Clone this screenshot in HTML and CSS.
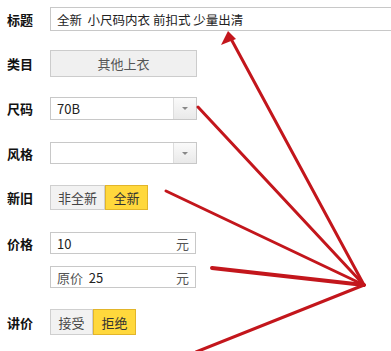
FILE: index.html
```html
<!DOCTYPE html>
<html lang="zh">
<head>
  <meta charset="UTF-8" />
  <meta name="viewport" content="width=device-width, initial-scale=1.0" />
  <title>发布闲置</title>
  <link rel="stylesheet" href="styles.css">
</head>
<body>
  <div class="page">
    <div class="form">
      <div class="row row-title">
        <label class="lbl">标题</label>
        <div class="field field-title">全新&nbsp;&nbsp;小尺码内衣 前扣式 少量出清</div>
      </div>

      <div class="row row-cat">
        <label class="lbl">类目</label>
        <div class="btn-cat">其他上衣</div>
      </div>

      <div class="row row-size">
        <label class="lbl">尺码</label>
        <div class="select">
          <span class="select-val">70B</span>
          <span class="select-arrow"><i></i></span>
        </div>
      </div>

      <div class="row row-style">
        <label class="lbl">风格</label>
        <div class="select">
          <span class="select-val"></span>
          <span class="select-arrow"><i></i></span>
        </div>
      </div>

      <div class="row row-new">
        <label class="lbl">新旧</label>
        <div class="toggle">
          <span class="opt opt-wide">非全新</span>
          <span class="opt on">全新</span>
        </div>
      </div>

      <div class="row row-price">
        <label class="lbl">价格</label>
        <div class="field price"><span>10</span><span class="unit">元</span></div>
      </div>

      <div class="row row-orig">
        <label class="lbl"></label>
        <div class="field price"><span><span class="muted">原价</span>&nbsp;&nbsp;25</span><span class="unit">元</span></div>
      </div>

      <div class="row row-bargain">
        <label class="lbl">讲价</label>
        <div class="toggle">
          <span class="opt">接受</span>
          <span class="opt on">拒绝</span>
        </div>
      </div>
    </div>

    <svg class="arrows" width="391" height="351" viewBox="0 0 391 351">
      <g stroke="#c3161c" stroke-width="3" stroke-linecap="round" fill="none">
        <line x1="364" y1="285" x2="230" y2="37" />
        <line x1="364" y1="285" x2="198" y2="107" />
        <line x1="364" y1="285" x2="166" y2="191" />
        <line x1="364" y1="285" x2="212" y2="268" stroke-width="4" />
        <line x1="364" y1="285" x2="196" y2="352" />
      </g>
      <polygon points="228,31 221,45 236,39" fill="#c3161c" />
    </svg>
  </div>
</body>
</html>
```

FILE: styles.css
```css
html, body {
  margin: 0;
  padding: 0;
  background: #fff;
  overflow: hidden;
  font-family: "Noto Sans CJK SC", "Noto Sans", sans-serif;
  font-size: 13px;
  color: #333;
}
.page {
  position: relative;
  width: 391px;
  height: 351px;
}
.form {
  display: flex;
  flex-direction: column;
  padding-top: 7px;
}
.row {
  display: flex;
  align-items: center;
}
.lbl {
  width: 50px;
  padding-left: 7px;
  box-sizing: border-box;
  font-weight: bold;
  font-size: 13px;
  color: #111;
  flex-shrink: 0;
}
.field {
  box-sizing: border-box;
  border: 1px solid #c8c8c8;
  background: #fff;
  display: flex;
  align-items: center;
  padding: 0 6px;
  color: #222;
}
.field-title {
  width: 360px;
  height: 24px;
  border-right: none;
  white-space: nowrap;
  font-size: 12.5px;
}
.row-title { margin-bottom: 19px; }
.btn-cat {
  width: 147px;
  height: 27px;
  box-sizing: border-box;
  border: 1px solid #ccc;
  background: #f0f0f0;
  display: flex;
  align-items: center;
  justify-content: center;
  color: #555;
}
.row-cat { margin-bottom: 20px; }
.select {
  width: 147px;
  box-sizing: border-box;
  border: 1px solid #c8c8c8;
  display: flex;
  background: #fff;
}
.row-size .select { height: 23px; }
.row-style .select { height: 22px; }
.row-size { margin-bottom: 22px; }
.row-style { margin-bottom: 21px; }
.select-val {
  flex: 1;
  display: flex;
  align-items: center;
  padding-left: 6px;
  color: #222;
}
.select-arrow {
  width: 22px;
  border-left: 1px solid #ddd;
  background: linear-gradient(#fafafa, #e9e9e9);
  display: flex;
  align-items: center;
  justify-content: center;
}
.select-arrow i {
  width: 0;
  height: 0;
  border-left: 3px solid transparent;
  border-right: 3px solid transparent;
  border-top: 3px solid #888;
}
.toggle {
  display: flex;
  box-sizing: border-box;
}
.opt {
  width: 43px;
  box-sizing: border-box;
  border: 1px solid #cfcfcf;
  background: #f2f2f2;
  display: flex;
  align-items: center;
  justify-content: center;
  color: #444;
}
.opt-wide { width: 55px; }
.opt.on {
  background: #ffd83c;
  border-color: #e2b52a;
  color: #333;
}
.row-new .opt { height: 25px; }
.row-new { margin-bottom: 22px; }
.price {
  width: 146px;
  height: 22px;
  justify-content: space-between;
  padding: 0 6px 0 6px;
}
.unit { color: #555; }
.muted { color: #555; }
.row-price { margin-bottom: 12px; }
.row-orig { margin-bottom: 21px; }
.row-bargain .opt { height: 26px; }
.arrows {
  position: absolute;
  left: 0;
  top: 0;
  pointer-events: none;
}
```
